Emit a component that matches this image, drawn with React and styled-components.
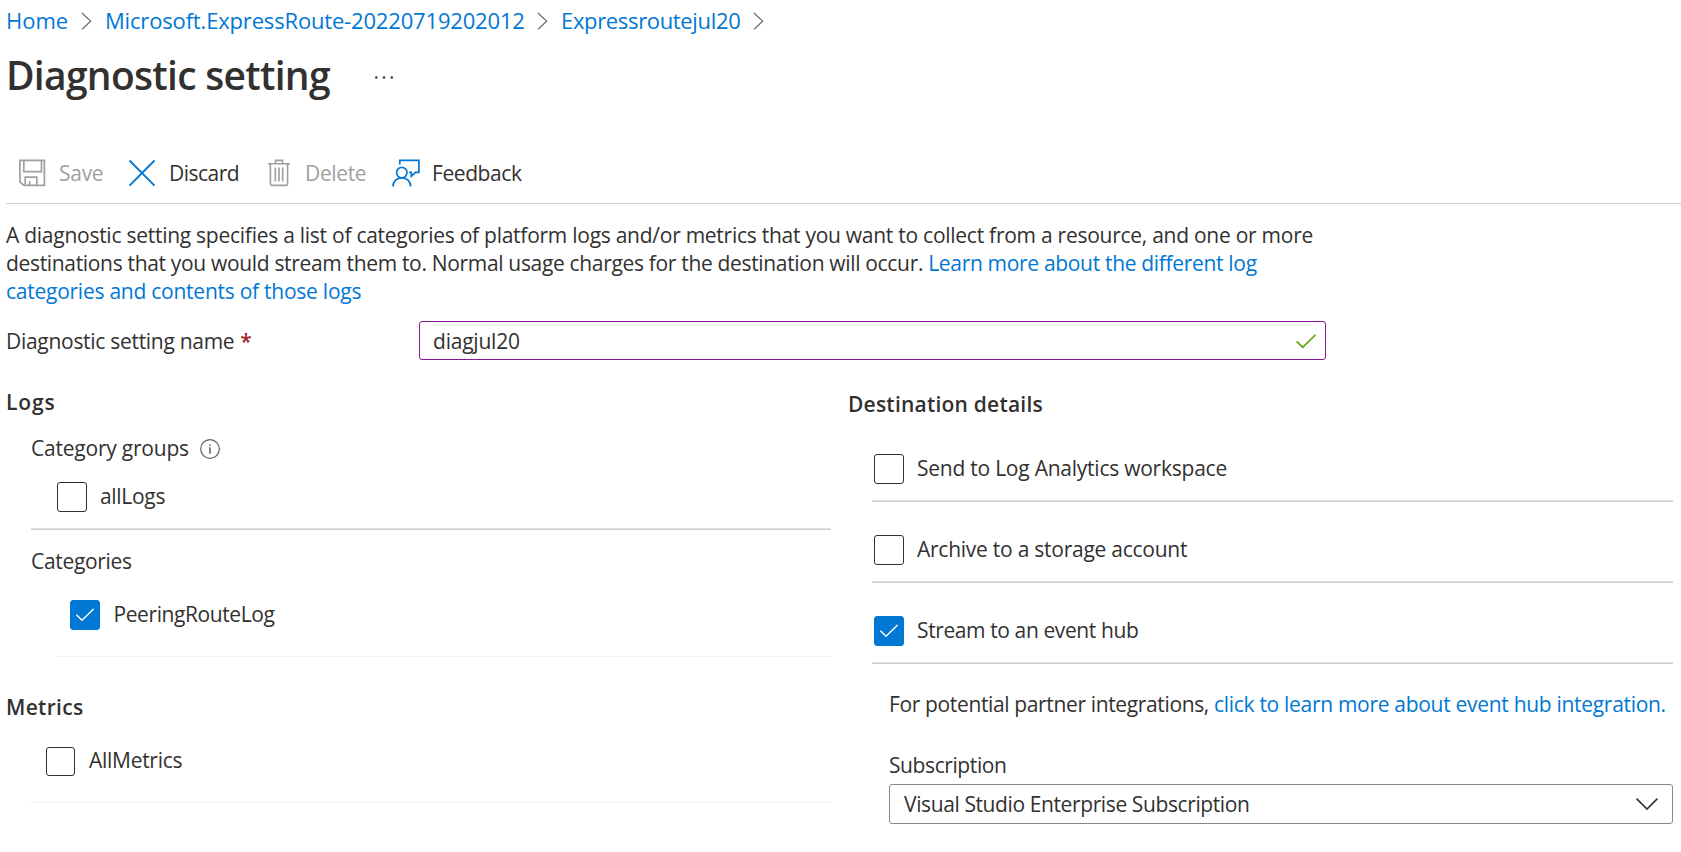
import React from 'react';
import styled, { createGlobalStyle } from 'styled-components';

const GlobalStyle = createGlobalStyle`
  * { box-sizing: border-box; }
  body {
    margin: 0;
    background: #fff;
    color: #323130;
    font: 400 21px/28px "Open Sans", "Noto Sans", sans-serif;
    letter-spacing: -0.27px;
    overflow: hidden;
  }
`;

const Page = styled.main`
  width: 1681px;
  height: 852px;
  padding: 6px 0 0 6px;
  overflow: hidden;
`;

/* Text run with its own tracking */
const Text = styled.span`
  letter-spacing: ${(p) => p.$track ?? -0.27}px;
  white-space: pre;
`;

const Link = styled(Text).attrs({ as: 'a' })`
  color: #0078d4;
  text-decoration: none;
`;

const Breadcrumb = styled.nav`
  display: flex;
  align-items: center;
  height: 28px;
  font-size: 22px;
`;

const Crumb = styled(Link)`
  width: ${(p) => p.$width}px;
`;

const Separator = styled.svg`
  flex: none;
  width: 12px;
  height: 18px;
  margin: 2px 12px 0 14px;
`;

const Header = styled.header`
  display: flex;
  align-items: center;
  height: 52px;
  margin-top: 15px;

  svg { margin-top: 4px; }
`;

const Title = styled.h1`
  width: 366px;
  margin: 0;
  font-size: 39px;
  font-weight: 600;
  line-height: 52px;
  letter-spacing: -0.71px;
  white-space: nowrap;
`;

const Toolbar = styled.div`
  display: flex;
  align-items: center;
  height: 62px;
  margin-top: 41px;
  padding-left: 12px;
  border-bottom: 1px solid #d2d0ce;
`;

const Command = styled.button`
  display: flex;
  align-items: center;
  gap: ${(p) => p.$gap}px;
  width: ${(p) => p.$width}px;
  padding: 0;
  border: 0;
  background: none;
  color: ${(p) => (p.disabled ? '#a19f9d' : '#323130')};
  font: inherit;
  text-align: left;

  svg {
    flex: none;
    color: ${(p) => (p.disabled ? '#a19f9d' : '#0078d4')};
  }

  span { padding-top: 1px; }
`;

const Description = styled.p`
  margin: 17px 0 0;
`;

const Field = styled.div`
  display: flex;
  align-items: center;
  height: 39px;
  margin-top: 16px;
`;

const FieldLabel = styled.label`
  width: 413px;
  padding-top: 1px;
`;

const Required = styled.span`
  margin-left: 6px;
  color: #a4262c;
  font-weight: 600;
`;

const Input = styled.div`
  display: flex;
  align-items: center;
  justify-content: space-between;
  width: 907px;
  height: 39px;
  padding: 0 8px 0 13px;
  border: 1px solid #881798;
  border-radius: 3px;
`;

const Columns = styled.div`
  display: grid;
  grid-template-columns: 825px 825px;
  column-gap: 17px;
`;

const Column = styled.section`
  display: flex;
  flex-direction: column;
  padding-top: ${(p) => p.$top}px;
`;

const Heading = styled.h2`
  margin: 0;
  font-size: 21px;
  font-weight: 600;
  line-height: 28px;
  letter-spacing: ${(p) => p.$track}px;
`;

const MetricsHeading = styled(Heading)`
  margin-top: 36px;
`;

const GroupLabel = styled.div`
  display: flex;
  align-items: center;
  gap: 11px;
  height: 28px;
  margin: ${(p) => p.$top}px 0 0 25px;

  svg { margin-top: 2px; }
`;

const Option = styled.label`
  display: flex;
  align-items: center;
  gap: ${(p) => p.$gap}px;
  height: 30px;
  margin: ${(p) => p.$top}px 0 0 ${(p) => p.$indent}px;

  span { margin-bottom: 2px; }
`;

const Box = styled.i`
  display: flex;
  align-items: center;
  justify-content: center;
  flex: none;
  width: ${(p) => p.$size}px;
  height: ${(p) => p.$size}px;
  border: 1px solid ${(p) => (p.$checked ? '#0078d4' : '#323130')};
  border-radius: 3px;
  background: ${(p) => (p.$checked ? '#0078d4' : '#fff')};
`;

const Divider = styled.hr`
  width: auto;
  height: 2px;
  margin: 16px 0 0 ${(p) => p.$indent}px;
  border: 0;
  border-top: 1px solid #e1dfdd;
  border-bottom: 1px solid #d2d0ce;
`;

const FaintDivider = styled.hr`
  height: 1px;
  margin: 26px 0 0 ${(p) => p.$indent}px;
  border: 0;
  background: #f1f0ef;
`;

const HubSettings = styled.div`
  display: flex;
  flex-direction: column;
  padding: 26px 0 0 41px;
`;

const Partner = styled.div`
  height: 28px;
  white-space: nowrap;
`;

const SelectLabel = styled.label`
  margin-top: 33px;
`;

const Select = styled.div`
  display: flex;
  align-items: center;
  justify-content: space-between;
  height: 40px;
  margin-top: 5px;
  padding: 0 13px 0 14px;
  border: 1px solid #8a8886;
  border-radius: 3px;
`;

const Chevron = () => (
  <Separator viewBox="0 0 12 18" fill="none" stroke="#605e5c" strokeWidth="1.1">
    <path d="M1 1 9.6 9.2 1 17.4" />
  </Separator>
);

const SaveIcon = () => (
  <svg width="28" height="28" viewBox="0 0 28 28" fill="none" stroke="currentColor" strokeWidth="1.7">
    <path d="M1.9 1.4h24.5v25H6L1.9 22.9z" />
    <path d="M5.8 1.4v11.3h17.7V1.4M7.2 26.4v-8.2h11.6v8.2M11.6 26.4v-4.2" />
  </svg>
);

const DiscardIcon = () => (
  <svg width="28" height="28" viewBox="0 0 28 28" fill="none" stroke="currentColor" strokeWidth="1.9">
    <path d="m1.5 1.5 25 25.2m0-25.2L1.5 26.7" />
  </svg>
);

const DeleteIcon = () => (
  <svg width="22" height="28" viewBox="0 0 22 28" fill="none" stroke="currentColor" strokeWidth="1.6">
    <path d="M0 4.7h22M7.5 4.7V1.4h7v3.3M2.4 4.7v20q0 1.7 1.7 1.7h13.8q1.7 0 1.7-1.7v-20M7.3 8.6v14M11 8.6v14M14.7 8.6v14" />
  </svg>
);

const FeedbackIcon = () => (
  <svg width="28" height="28" viewBox="0 0 28 28" fill="none" stroke="currentColor" strokeWidth="1.7">
    <path d="M7.8 5.6V1.4h19.1v11.9h-3.5l-4.1 4v-4h-2.2" />
    <circle cx="9.8" cy="13.6" r="5.2" />
    <path d="M1 27.6c0-5.3 3.8-8.8 8.8-8.8s8.8 3.5 8.8 8.8" />
  </svg>
);

const MoreIcon = () => (
  <svg width="22" height="6" viewBox="0 0 22 6" fill="#323130">
    <circle cx="4.3" cy="3.5" r="1.2" />
    <circle cx="12" cy="3.5" r="1.2" />
    <circle cx="19.8" cy="3.5" r="1.2" />
  </svg>
);

const InfoIcon = () => (
  <svg width="20" height="20" viewBox="0 0 20 20" fill="none" stroke="#605e5c" strokeWidth="1.2">
    <circle cx="10" cy="10" r="9.3" />
    <path d="M10 8.3v6.4M10 5.2v1.6" strokeWidth="1.5" />
  </svg>
);

const ValidIcon = () => (
  <svg width="22" height="16" viewBox="0 0 22 16" fill="none" stroke="#57a300" strokeWidth="1.6">
    <path d="m1.7 8.4 6 6L20.5 1.8" />
  </svg>
);

const CheckMark = () => (
  <svg width="20" height="16" viewBox="0 0 20 16" fill="none" stroke="#fff" strokeWidth="1.4">
    <path d="m1.4 7.7 5.6 5.6L18.6 1.9" />
  </svg>
);

const DownIcon = () => (
  <svg width="24" height="14" viewBox="0 0 24 14" fill="none" stroke="#323130" strokeWidth="1.6">
    <path d="m1.6 1.6 10.4 10.4L22.4 1.6" />
  </svg>
);

function Checkbox({ label, checked, top, indent, size = 30, gap = 13, track }) {
  return (
    <Option $top={top} $indent={indent} $gap={gap}>
      <Box $checked={checked} $size={size}>{checked && <CheckMark />}</Box>
      <Text $track={track}>{label}</Text>
    </Option>
  );
}

export default function App() {
  return (
    <>
      <GlobalStyle />
      <Page>
        <Breadcrumb>
          <Crumb $width={61} $track={0}>Home</Crumb>
          <Chevron />
          <Crumb $width={418} $track={-0.17}>Microsoft.ExpressRoute-20220719202012</Crumb>
          <Chevron />
          <Crumb $width={178} $track={-0.34}>Expressroutejul20</Crumb>
          <Chevron />
        </Breadcrumb>

        <Header>
          <Title>Diagnostic setting</Title>
          <MoreIcon />
        </Header>

        <Toolbar>
          <Command disabled $width={110} $gap={13}><SaveIcon /><Text>Save</Text></Command>
          <Command $width={140} $gap={13}><DiscardIcon /><Text $track={-0.5}>Discard</Text></Command>
          <Command disabled $width={124} $gap={15}><DeleteIcon /><Text $track={-0.36}>Delete</Text></Command>
          <Command $width={140} $gap={12}><FeedbackIcon /><Text $track={-0.42}>Feedback</Text></Command>
        </Toolbar>

        <Description>
          <Text $track={-0.26}>A diagnostic setting specifies a list of categories of platform logs and/or metrics that you want to collect from a resource, and one or more</Text>
          <br />
          <Text $track={-0.328}>destinations that you would stream them to. Normal usage charges for the destination will occur. </Text>
          <Link $track={-0.32}>Learn more about the different log</Link>
          <br />
          <Link $track={-0.25}>categories and contents of those logs</Link>
        </Description>

        <Field>
          <FieldLabel>
            <Text $track={-0.29}>Diagnostic setting name</Text>
            <Required>*</Required>
          </FieldLabel>
          <Input>
            <Text $track={-0.22}>diagjul20</Text>
            <ValidIcon />
          </Input>
        </Field>

        <Columns>
          <Column $top={28}>
            <Heading $track={0.9}>Logs</Heading>
            <GroupLabel $top={18}><Text $track={-0.222}>Category groups</Text><InfoIcon /></GroupLabel>
            <Checkbox label="allLogs" top={20} indent={51} track={-0.3} />
            <Divider $indent={25} />
            <GroupLabel $top={17}><Text $track={-0.321}>Categories</Text></GroupLabel>
            <Checkbox label="PeeringRouteLog" checked top={25} indent={64} gap={13.5} track={-0.409} />
            <FaintDivider $indent={50} />
            <MetricsHeading $track={0.316}>Metrics</MetricsHeading>
            <Checkbox label="AllMetrics" top={25} indent={40} size={29} gap={14} track={-0.28} />
            <FaintDivider $indent={25} />
          </Column>

          <Column $top={30}>
            <Heading $track={0.22}>Destination details</Heading>
            <Checkbox label="Send to Log Analytics workspace" top={36} indent={26} track={-0.24} />
            <Divider $indent={24} />
            <Checkbox label="Archive to a storage account" top={33} indent={26} track={-0.25} />
            <Divider $indent={24} />
            <Checkbox label="Stream to an event hub" checked top={33} indent={26} track={-0.389} />
            <Divider $indent={24} />
            <HubSettings>
              <Partner>
                <Text $track={-0.36}>For potential partner integrations, </Text>
                <Link $track={-0.3}>click to learn more about event hub integration.</Link>
              </Partner>
              <SelectLabel><Text $track={-0.405}>Subscription</Text></SelectLabel>
              <Select>
                <Text $track={-0.392}>Visual Studio Enterprise Subscription</Text>
                <DownIcon />
              </Select>
            </HubSettings>
          </Column>
        </Columns>
      </Page>
    </>
  );
}
